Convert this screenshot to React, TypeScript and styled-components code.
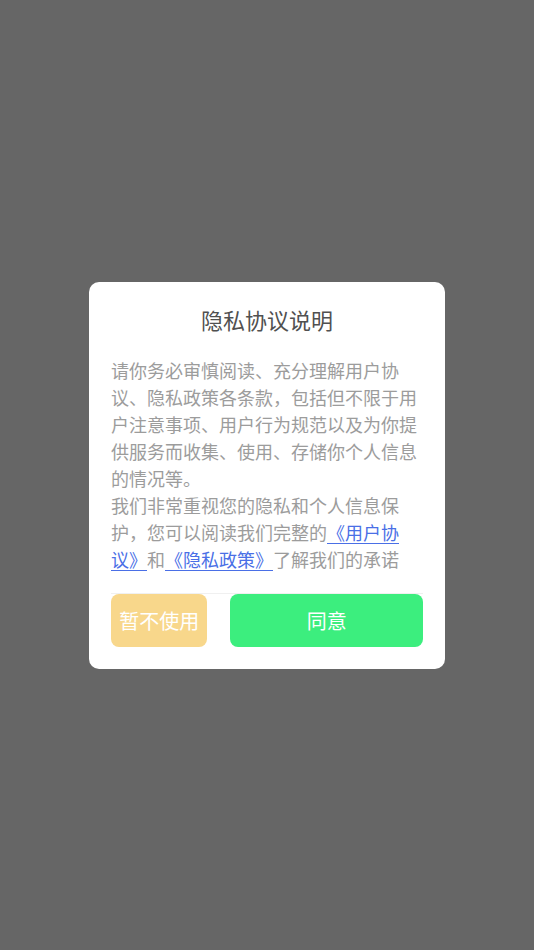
import styled, { createGlobalStyle } from 'styled-components';

const GlobalStyle = createGlobalStyle`
  html, body {
    margin: 0;
    padding: 0;
    height: 100%;
  }
  body {
    font-family: "Noto Sans CJK SC", "Noto Sans", sans-serif;
  }
  #root {
    height: 100%;
  }
`;

const Overlay = styled.div`
  height: 100vh;
  background: #666666;
  display: flex;
  align-items: center;
  justify-content: center;
`;

const Dialog = styled.div`
  width: 356px;
  box-sizing: border-box;
  background: #ffffff;
  border-radius: 10px;
  padding: 13px 22px 22px;
  display: flex;
  flex-direction: column;
`;

const Title = styled.h2`
  margin: 0;
  font-size: 22px;
  line-height: 48px;
  font-weight: 400;
  color: #505050;
  text-align: center;
`;

const Content = styled.div`
  margin-top: 14px;
  height: 236px;
  overflow: hidden;
  font-size: 18px;
  line-height: 27px;
  color: #9c9c9c;
`;

const Paragraph = styled.p`
  margin: 0;
`;

const Link = styled.a`
  color: #4a6fe6;
  text-decoration: underline;
  text-underline-offset: 3px;
`;

const Actions = styled.div`
  border-top: 1px solid #f0f0f0;
  display: flex;
  gap: 23px;
`;

const ActionButton = styled.button<{ $variant: 'decline' | 'accept' }>`
  flex: ${props => (props.$variant === 'accept' ? 2 : 1)};
  height: 53px;
  border: none;
  border-radius: 8px;
  background: ${props => (props.$variant === 'accept' ? '#3cee7e' : '#f8d78b')};
  color: #ffffff;
  font-family: inherit;
  font-size: 20px;
  padding: 0;
  cursor: pointer;
`;

function App() {
  return (
    <>
      <GlobalStyle />
      <Overlay>
        <Dialog>
          <Title>隐私协议说明</Title>
          <Content>
            <Paragraph>
              请你务必审慎阅读、充分理解用户协议、隐私政策各条款，包括但不限于用户注意事项、用户行为规范以及为你提供服务而收集、使用、存储你个人信息的情况等。
            </Paragraph>
            <Paragraph>
              我们非常重视您的隐私和个人信息保护，您可以阅读我们完整的<Link>《用户协议》</Link>和<Link>《隐私政策》</Link>了解我们的承诺
            </Paragraph>
          </Content>
          <Actions>
            <ActionButton $variant="decline">暂不使用</ActionButton>
            <ActionButton $variant="accept">同意</ActionButton>
          </Actions>
        </Dialog>
      </Overlay>
    </>
  );
}

export default App;
